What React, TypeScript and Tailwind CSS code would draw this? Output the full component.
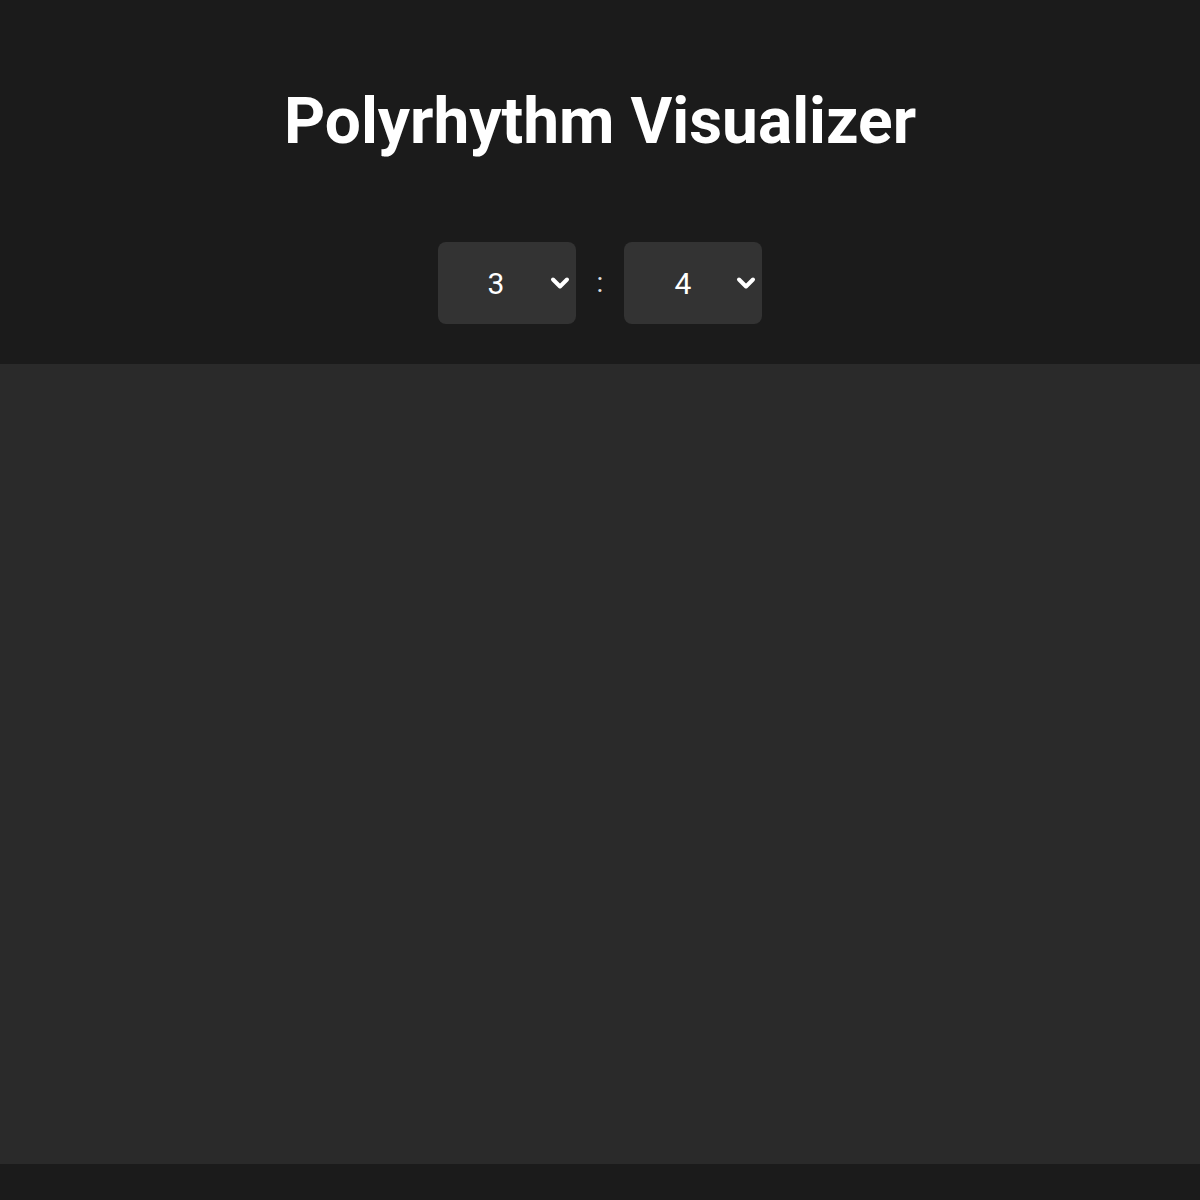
import React, { useState } from 'react';

function RatioSelect({ value, onChange }: { value: number; onChange: (v: number) => void }) {
    return (
        <div className="relative">
            <select
                value={value}
                onChange={(e) => onChange(Number(e.target.value))}
                className="appearance-none w-[138px] h-[82px] pl-[50px] rounded-lg bg-[#333333] text-white text-[30px] font-['Roboto',sans-serif] outline-none"
            >
                {[2, 3, 4, 5, 6, 7, 8, 9].map((n) => (
                    <option key={n} value={n}>{n}</option>
                ))}
            </select>
            <svg
                className="absolute right-[6px] top-[34px] pointer-events-none"
                width="20"
                height="14"
                viewBox="0 0 20 14"
                fill="none"
            >
                <path d="M3 3.5L10 10.5L17 3.5" stroke="white" strokeWidth="4" strokeLinecap="round" strokeLinejoin="round" />
            </svg>
        </div>
    );
}

export default function App() {
    const [a, setA] = useState(3);
    const [b, setB] = useState(4);

    return (
        <div className="min-h-[1200px] bg-[#1b1b1b] font-['Roboto',sans-serif] text-white">
            <header className="flex flex-col items-center pt-[84px] pb-[40px]">
                <h1 className="text-[64px] leading-[75px] font-bold">Polyrhythm Visualizer</h1>
                <div className="mt-[83px] flex items-center gap-[21px]">
                    <RatioSelect value={a} onChange={setA} />
                    <span className="text-[28px] text-[#dddddd]">:</span>
                    <RatioSelect value={b} onChange={setB} />
                </div>
            </header>
            <div className="h-[800px] bg-[#2a2a2a]" />
        </div>
    );
}
